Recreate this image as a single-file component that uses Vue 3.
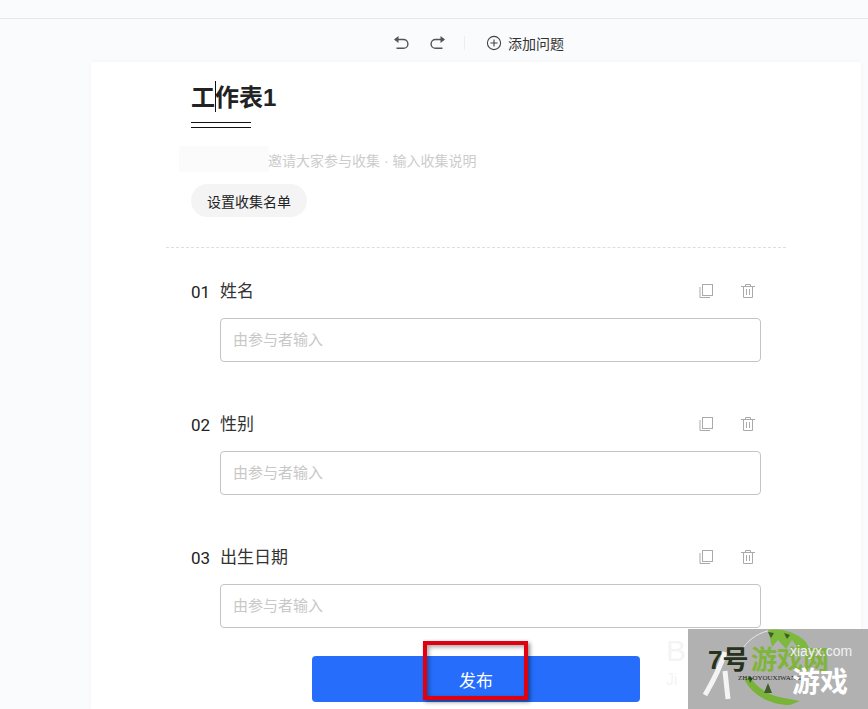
<template>
  <div class="page">
    <div class="topbar"></div>
    <div class="toolbar">
      <button class="tool-btn">
        <svg width="18" height="18" viewBox="0 0 18 18" fill="none" stroke="#555" stroke-width="1.4">
          <path d="M3 5.5h8.5a4.4 4.4 0 0 1 0 8.8H4.5" />
          <path d="M6.5 2 2 5.5 6.5 9z" fill="#555" stroke="none" />
        </svg>
      </button>
      <button class="tool-btn">
        <svg width="18" height="18" viewBox="0 0 18 18" fill="none" stroke="#555" stroke-width="1.4">
          <path d="M15 5.5H6.5a4.4 4.4 0 0 0 0 8.8h7" />
          <path d="M11.5 2 16 5.5 11.5 9z" fill="#555" stroke="none" />
        </svg>
      </button>
      <span class="divider"></span>
      <button class="add-btn">
        <svg width="16" height="16" viewBox="0 0 16 16" fill="none" stroke="#444" stroke-width="1.1">
          <circle cx="8" cy="8" r="6.6" />
          <path d="M8 4.4v7.2M4.4 8h7.2" />
        </svg>
        <span>添加问题</span>
      </button>
    </div>

    <div class="sheet">
      <div class="head">
        <h1 class="title">工<span class="caret"></span>作表1</h1>
        <div class="title-rule"></div>
        <div class="desc-row">
          <span class="blur-patch"></span>
          <span class="desc">邀请大家参与收集 · 输入收集说明</span>
        </div>
        <button class="list-btn">设置收集名单</button>
      </div>

      <div class="dashed"></div>

      <div v-for="q in questions" :key="q.no" class="question">
        <div class="q-head">
          <span class="q-no">{{ q.no }}</span>
          <span class="q-name">{{ q.name }}</span>
          <span class="q-actions">
            <svg width="16" height="16" viewBox="0 0 16 16" fill="none" stroke="#aaa" stroke-width="1">
              <rect x="4.5" y="1.5" width="10" height="11" />
              <path d="M2 4v10.5h10" />
            </svg>
            <svg width="16" height="16" viewBox="0 0 16 16" fill="none" stroke="#aaa" stroke-width="1">
              <path d="M1 3.5h14M5.5 3.5V1.5h5v2M3.5 3.5v11h9v-11M6.5 6v6M9.5 6v6" />
            </svg>
          </span>
        </div>
        <div class="fake-input">由参与者输入</div>
      </div>
    </div>

    <div class="ghost">
      <span class="ghost-ba">B</span>
      <span class="ghost-jin">Ji</span>
    </div>

    <button class="publish">发布</button>
    <div class="red-box"></div>

    <div class="watermark">
      <svg class="wm-art" width="180" height="80" viewBox="0 0 180 80">
        <path d="M55 19C62 9 72 3 84 1" fill="none" stroke="#e6e6e6" stroke-width="1" />
        <path d="M80 1c14-2 28 2 38 12l4 8-12-2-6-8-6 9-8-9-6 7z" fill="#7db93c" />
        <path d="M80 3l3 6 3-5zM96 4l3 6 3-4z" fill="#3d5c2a" />
        <path d="M56 50c8 16 26 26 46 26l10-4-16-3c-14-2-26-9-34-21z" fill="#79b338" />
        <path d="M76 64l4-10 4 10zM60 47l5 2-3 5z" fill="#3d5c2a" />
        <path d="M37 23C32 40 24 54 17 66" fill="none" stroke="#f4f4f4" stroke-width="5" />
        <path d="M37 42l3 28" fill="none" stroke="#f4f4f4" stroke-width="5" />
      </svg>
      <span class="wm-num">7号</span>
      <span class="wm-green">游戏网</span>
      <span class="wm-url">xiayx.com</span>
      <span class="wm-pin">ZHAOYOUXIWANG</span>
      <span class="wm-white">游戏</span>
    </div>
  </div>
</template>

<script setup>
const questions = [
  { no: '01', name: '姓名' },
  { no: '02', name: '性别' },
  { no: '03', name: '出生日期' }
];
</script>

<style>
html, body {
  margin: 0;
  height: 100%;
  overflow: hidden;
}
</style>

<style scoped>
.page {
  position: relative;
  width: 868px;
  height: 709px;
  overflow: hidden;
  background: #fafbfd;
  font-family: "Liberation Sans", "Noto Sans CJK SC", sans-serif;
  color: #222;
}

.topbar {
  height: 18px;
  border-bottom: 1px solid #e6e7e9;
}

.toolbar {
  height: 43px;
  box-sizing: border-box;
  padding: 5px 0 0 392px;
  display: flex;
  align-items: center;
}

.tool-btn {
  width: 18px;
  height: 18px;
  padding: 0;
  margin-right: 19px;
  background: none;
  border: none;
  display: flex;
}

.divider {
  width: 1px;
  height: 14px;
  background: #eceef0;
  margin-left: -2px;
  margin-right: 21px;
}

.add-btn {
  display: flex;
  align-items: center;
  gap: 6px;
  padding: 0;
  background: none;
  border: none;
  font: inherit;
  font-size: 14px;
  color: #333;
}

.sheet {
  width: 770px;
  margin-left: 91px;
  height: 648px;
  background: #fff;
  box-sizing: border-box;
  padding-top: 1px;
  box-shadow: 0 0 4px rgba(0, 0, 0, 0.04);
}

.head {
  padding-left: 100px;
}

.title {
  position: relative;
  margin: 18px 0 0;
  font-size: 24px;
  line-height: 34px;
  font-weight: 700;
  color: #222;
}

.caret {
  position: absolute;
  left: 24px;
  top: 0;
  width: 1px;
  height: 31px;
  background: #111;
}

.title-rule {
  width: 60px;
  height: 3px;
  margin-top: 7px;
  border-top: 1px solid #111;
  border-bottom: 1px solid #111;
  padding-top: 1px;
  box-sizing: content-box;
}

.desc-row {
  display: flex;
  align-items: center;
  height: 26px;
  margin-top: 18px;
  margin-left: -12px;
}

.blur-patch {
  width: 90px;
  height: 26px;
  background: #fbfbfb;
  flex: none;
}

.desc {
  margin-left: -1px;
  padding-top: 2px;
  font-size: 14px;
  color: #ccc;
  white-space: nowrap;
}

.list-btn {
  display: block;
  height: 33px;
  width: 116px;
  margin-top: 12px;
  padding: 0;
  background: #f4f4f5;
  border: none;
  border-radius: 17px;
  font: inherit;
  font-size: 14px;
  color: #222;
}

.dashed {
  width: 620px;
  margin: 30px 0 0 75px;
  border-top: 1px dashed #dedede;
}

.question {
  height: 133px;
  padding-left: 100px;
}

.q-head {
  display: flex;
  align-items: center;
  height: 20px;
  padding-top: 33px;
}

.q-no {
  width: 29px;
  padding-top: 2px;
  font-family: Roboto, sans-serif;
  font-size: 17px;
  line-height: 20px;
  color: #222;
}

.q-name {
  padding-top: 2px;
  font-size: 17px;
  line-height: 20px;
  color: #333;
}

.q-actions {
  margin-left: auto;
  margin-right: 105px;
  display: flex;
  gap: 26px;
}

.fake-input {
  width: 541px;
  height: 44px;
  margin: 17px 0 0 29px;
  box-sizing: border-box;
  padding-left: 12px;
  line-height: 41px;
  border: 1px solid #c4c4c4;
  border-radius: 4px;
  background: #fff;
  font-size: 15px;
  color: #c8c8c8;
}

.ghost {
  position: absolute;
  left: 666px;
  top: 634px;
  font-size: 30px;
  color: #f4f4f4;
}

.ghost-ba {
  display: block;
  line-height: 34px;
}

.ghost-jin {
  display: block;
  margin-top: 2px;
  font-size: 16px;
  line-height: 20px;
}

.publish {
  position: absolute;
  left: 312px;
  top: 656px;
  width: 328px;
  height: 46px;
  background: #266dfb;
  border: none;
  border-radius: 4px;
  font: inherit;
  font-size: 17px;
  padding-top: 1px;
  color: #fff;
}

.red-box {
  position: absolute;
  left: 423px;
  top: 641px;
  width: 105px;
  height: 59px;
  box-sizing: border-box;
  border: 4px solid #e0000f;
  box-shadow: 2px 2px 4px rgba(0, 0, 0, 0.45), inset 2px 2px 4px rgba(0, 0, 0, 0.35);
}

.watermark {
  position: absolute;
  left: 688px;
  top: 629px;
  width: 180px;
  height: 80px;
  background: #b1b1b1;
  overflow: hidden;
}

.wm-art {
  position: absolute;
  left: 0;
  top: 0;
}

.wm-num {
  position: absolute;
  left: 20px;
  top: 17px;
  font-size: 26px;
  line-height: 28px;
  font-weight: 700;
  color: #26321c;
}

.wm-green {
  position: absolute;
  left: 63px;
  top: 17px;
  font-size: 26px;
  line-height: 28px;
  font-weight: 700;
  color: #7fb53a;
}

.wm-url {
  position: absolute;
  left: 102px;
  top: 13px;
  font-size: 14px;
  line-height: 18px;
  color: #f2f2f2;
}

.wm-pin {
  position: absolute;
  left: 50px;
  top: 45px;
  font-family: "Liberation Serif", serif;
  font-size: 7px;
  line-height: 9px;
  color: #1d1d1d;
}

.wm-white {
  position: absolute;
  left: 104px;
  top: 39px;
  font-size: 28px;
  line-height: 30px;
  font-weight: 700;
  color: #fff;
}
</style>
